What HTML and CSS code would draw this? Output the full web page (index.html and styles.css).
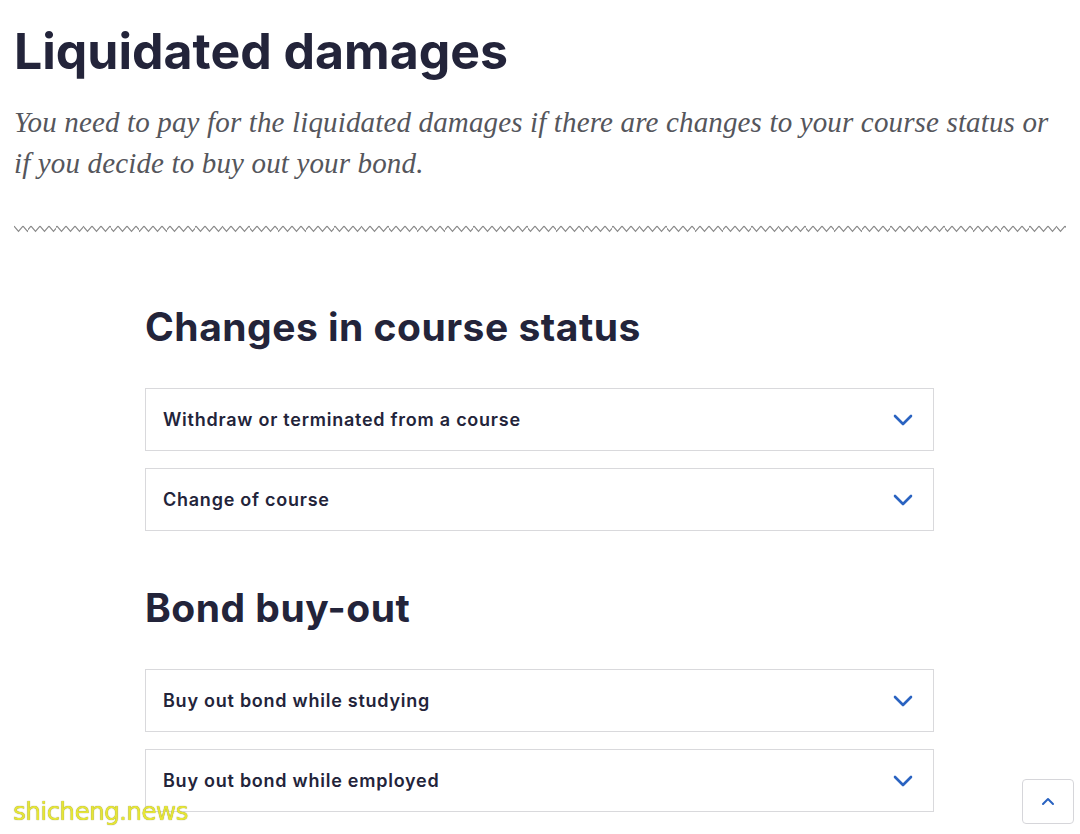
FILE: index.html
```html
<!DOCTYPE html>
<html lang="en">
<head>
<meta charset="utf-8">
<title>Liquidated damages</title>
<link rel="stylesheet" href="styles.css">
</head>
<body>
<main class="page">
  <header class="intro">
    <h1 class="title">Liquidated damages</h1>
    <p class="lead">You need to pay for the liquidated damages if there are changes to your course status or if you decide to buy out your bond.</p>
    <div class="zigzag"></div>
  </header>

  <section class="group">
    <h2 class="group-title">Changes in course status</h2>
    <div class="accordion">
      <button class="acc-item"><span class="acc-label">Withdraw or terminated from a course</span>
        <svg class="chev" width="20" height="12" viewBox="0 0 20 12"><path d="M2 2 L10 10 L18 2" fill="none" stroke="#2a63c1" stroke-width="2.6" stroke-linecap="round" stroke-linejoin="round"/></svg>
      </button>
      <button class="acc-item"><span class="acc-label">Change of course</span>
        <svg class="chev" width="20" height="12" viewBox="0 0 20 12"><path d="M2 2 L10 10 L18 2" fill="none" stroke="#2a63c1" stroke-width="2.6" stroke-linecap="round" stroke-linejoin="round"/></svg>
      </button>
    </div>
  </section>

  <section class="group">
    <h2 class="group-title">Bond buy-out</h2>
    <div class="accordion">
      <button class="acc-item"><span class="acc-label">Buy out bond while studying</span>
        <svg class="chev" width="20" height="12" viewBox="0 0 20 12"><path d="M2 2 L10 10 L18 2" fill="none" stroke="#2a63c1" stroke-width="2.6" stroke-linecap="round" stroke-linejoin="round"/></svg>
      </button>
      <button class="acc-item"><span class="acc-label">Buy out bond while employed</span>
        <svg class="chev" width="20" height="12" viewBox="0 0 20 12"><path d="M2 2 L10 10 L18 2" fill="none" stroke="#2a63c1" stroke-width="2.6" stroke-linecap="round" stroke-linejoin="round"/></svg>
      </button>
    </div>
  </section>
</main>

<button class="to-top" aria-label="Back to top">
  <svg width="14" height="9" viewBox="0 0 14 9"><path d="M2 7 L7 2 L12 7" fill="none" stroke="#2a63c1" stroke-width="2" stroke-linecap="round" stroke-linejoin="round"/></svg>
</button>
<div class="watermark">shicheng.news</div>
</body>
</html>
```

FILE: styles.css
```css
html, body {
  margin: 0;
  padding: 0;
  background: #ffffff;
}
body {
  font-family: Inter, "Noto Sans", sans-serif;
  color: #23243a;
  overflow: hidden;
  height: 834px;
}
.page {
  padding: 0 14px;
}
.intro {
  padding-top: 22px;
}
.title {
  margin: 0;
  font-family: Inter, sans-serif;
  font-weight: 700;
  font-size: 50px;
  line-height: 58px;
  letter-spacing: 0;
  color: #23243a;
}
.lead {
  margin: 22px 0 0;
  font-family: "Liberation Serif", serif;
  font-style: italic;
  font-size: 29px;
  line-height: 41px;
  letter-spacing: 0.15px;
  color: #55565c;
  max-width: 1045px;
}
.zigzag {
  margin-top: 40px;
  width: 1052px;
  height: 10px;
  background-image: url("data:image/svg+xml,%3Csvg xmlns='http://www.w3.org/2000/svg' width='9' height='10' viewBox='0 0 9 10'%3E%3Cpath d='M0 2 L4.5 7.5 L9 2' fill='none' stroke='%23888' stroke-width='1.2'/%3E%3C/svg%3E");
  background-size: 8.7px 10px;
  background-repeat: repeat-x;
}
.group {
  margin-left: 131px;
  width: 789px;
}
.group-title {
  margin: 0;
  font-family: Inter, sans-serif;
  font-weight: 700;
  font-size: 39px;
  line-height: 46px;
  letter-spacing: 0.5px;
  color: #23243a;
}
.group:first-of-type .group-title {
  margin-top: 70px;
}
.group + .group .group-title {
  margin-top: 54px;
}
.accordion {
  margin-top: 38px;
  display: flex;
  flex-direction: column;
  gap: 17px;
}
.acc-item {
  display: flex;
  align-items: center;
  justify-content: space-between;
  width: 789px;
  height: 63px;
  box-sizing: border-box;
  padding: 0 20px 0 17px;
  border: 1px solid #d9d9dc;
  background: #fff;
  font: inherit;
  text-align: left;
  cursor: pointer;
}
.acc-label {
  font-family: Inter, sans-serif;
  font-weight: 600;
  font-size: 18px;
  letter-spacing: 0.75px;
  color: #23243a;
}
.chev {
  display: block;
}
.to-top {
  position: fixed;
  left: 1022px;
  top: 779px;
  width: 52px;
  height: 45px;
  box-sizing: border-box;
  border: 1px solid #d6d6da;
  border-radius: 4px;
  background: #fff;
  display: flex;
  align-items: center;
  justify-content: center;
  padding: 0;
}
.watermark {
  position: fixed;
  left: 13px;
  top: 797px;
  font-family: "DejaVu Sans", sans-serif;
  font-size: 25px;
  letter-spacing: -0.8px;
  color: #e6e636;
  text-shadow: 0 0 1px #7a7a20;
}
```
